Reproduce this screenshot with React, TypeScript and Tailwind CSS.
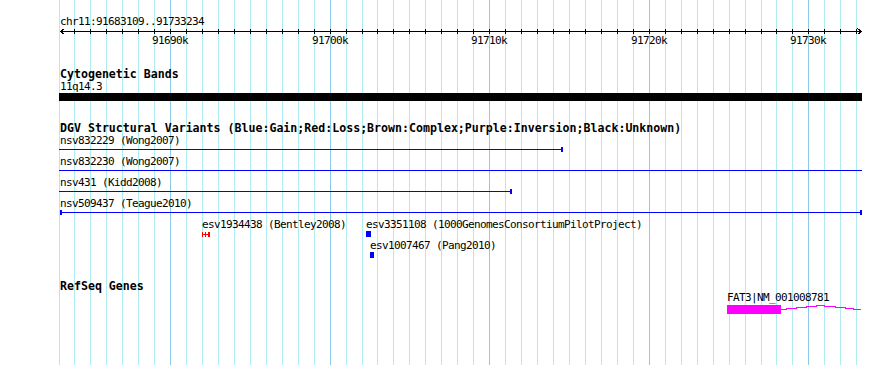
import type { ReactNode } from "react";

const START = 91683109;
const END = 91733234;
const LEFT = 60;
const SPAN = 800;

const toX = (bp: number) => Math.round(LEFT + ((bp - START) * SPAN) / (END - START));

// one grid line per kb, a bluer one every 10 kb
const gridKbs = Array.from({ length: 51 }, (_, i) => 91683 + i);
const majors = [91690, 91700, 91710, 91720, 91730];

interface Variant {
  endTick?: boolean;
  label: string;
  startTick?: boolean;
  x1: number;
  x2: number;
}

const variants: Variant[] = [
  { endTick: true, label: "nsv832229 (Wong2007)", x1: 59, x2: 563 },
  { label: "nsv832230 (Wong2007)", x1: 59, x2: 862 },
  { endTick: true, label: "nsv431 (Kidd2008)", x1: 59, x2: 512 },
  { endTick: true, label: "nsv509437 (Teague2010)", startTick: true, x1: 60, x2: 862 },
];

export default function App() {
  return (
    <div className="relative w-[890px] h-[365px] overflow-hidden bg-white text-black font-['DejaVu_Sans_Mono',monospace]">
      {/* background grid */}
      <svg className="absolute inset-0" height={365} width={890}>
        {gridKbs.map((kb) => {
          const x = Math.max(59, toX(kb * 1000)) + 0.5;
          const major = kb % 10 === 0;
          return (
            <line
              key={kb}
              stroke={major ? "#8ccbea" : "#aeecf2"}
              strokeWidth={1}
              x1={x}
              x2={x}
              y1={0}
              y2={365}
            />
          );
        })}
      </svg>

      <div className="relative flex flex-col pt-[15px]">
        {/* ruler */}
        <Line>
          <Label x={60}>chr11:91683109..91733234</Label>
        </Line>
        <svg className="block" height={6} shapeRendering="crispEdges" width={890}>
          <line stroke="#000" x1={60} x2={862} y1={3.5} y2={3.5} />
          {gridKbs.slice(1).map((kb) => {
            const x = toX(kb * 1000) + 0.5;
            return <line key={kb} stroke="#000" x1={x} x2={x} y1={1} y2={6} />;
          })}
          <polyline fill="none" points="64.5,0.5 60.5,3.5 64.5,6.5" stroke="#000" />
          <polyline fill="none" points="857.5,0.5 861.5,3.5 857.5,6.5" stroke="#000" />
        </svg>
        <Line>
          {majors.map((kb) => (
            <Label key={kb} x={toX(kb * 1000) - 18}>
              {kb}k
            </Label>
          ))}
        </Line>

        {/* cytogenetic bands */}
        <Title className="mt-[21px] h-[13px]">Cytogenetic Bands</Title>
        <div className="h-[12px] pl-[60px] text-[11px] tracking-[-0.62px] leading-[12px] whitespace-pre">11q14.3</div>
        <div className="ml-[59px] w-[803px] h-[8px] bg-black" />

        {/* structural variants */}
        <Title className="mt-[21px] h-[12px] leading-[12px]">
          DGV Structural Variants (Blue:Gain;Red:Loss;Brown:Complex;Purple:Inversion;Black:Unknown)
        </Title>
        {variants.map((v) => (
          <div key={v.label}>
            <Line>
              <Label x={60}>{v.label}</Label>
            </Line>
            <svg className="block" height={8} shapeRendering="crispEdges" width={890}>
              <rect fill="#0000ff" height={1} width={v.x2 - v.x1} x={v.x1} y={2} />
              {v.startTick && <rect fill="#0000ff" height={5} width={2} x={60} y={0} />}
              {v.endTick && <rect fill="#0000ff" height={5} width={2} x={v.x2 - 2} y={0} />}
            </svg>
          </div>
        ))}
        <Line>
          <Label x={202}>esv1934438 (Bentley2008)</Label>
          <Label x={366}>esv3351108 (1000GenomesConsortiumPilotProject)</Label>
        </Line>
        <svg className="block" height={8} shapeRendering="crispEdges" width={890}>
          <rect fill="#ff0000" height={5} width={1} x={202} y={1} />
          <rect fill="#ff0000" height={5} width={1} x={205} y={1} />
          <rect fill="#ff0000" height={5} width={2} x={208} y={1} />
          <rect fill="#ff0000" height={1} width={8} x={202} y={3} />
          <rect fill="#0000ff" height={6} width={5} x={366} y={0} />
        </svg>
        <Line>
          <Label x={370}>esv1007467 (Pang2010)</Label>
        </Line>
        <svg className="block" height={8} shapeRendering="crispEdges" width={890}>
          <rect fill="#0000ff" height={6} width={4} x={370} y={0} />
        </svg>

        {/* refseq genes */}
        <Title className="mt-[20px] h-[12px] leading-[12px]">RefSeq Genes</Title>
        <div className="relative h-[12px] text-[11px] tracking-[-0.62px] leading-[12px]">
          <Label x={727}>FAT3|NM_001008781</Label>
        </div>
        <svg className="block" height={14} shapeRendering="crispEdges" width={890}>
          <rect fill="#ff00ff" height={9} width={54} x={727} y={1} />
          <polyline
            fill="none"
            points="781,5.5 786,5.5 786,4.5 796,4.5 796,3.5 806,3.5 806,2.5 816,2.5 816,1.5 824,1.5 824,2.5 835,2.5 835,3.5 845,3.5 845,4.5 853,4.5 853,5.5 861,5.5"
            stroke="#ff00ff"
          />
        </svg>
      </div>
    </div>
  );
}

function Line({ children }: { children: ReactNode }) {
  return <div className="relative h-[13px] text-[11px] tracking-[-0.62px] leading-[13px]">{children}</div>;
}

function Label({ children, x }: { children: ReactNode; x: number }) {
  return (
    <span className="absolute top-0 whitespace-pre" style={{ left: x }}>
      {children}
    </span>
  );
}

function Title({ children, className }: { children: ReactNode; className?: string }) {
  return (
    <div className={`pl-[60px] text-[11.6px] font-bold leading-[13px] whitespace-pre ${className ?? ""}`}>
      {children}
    </div>
  );
}
